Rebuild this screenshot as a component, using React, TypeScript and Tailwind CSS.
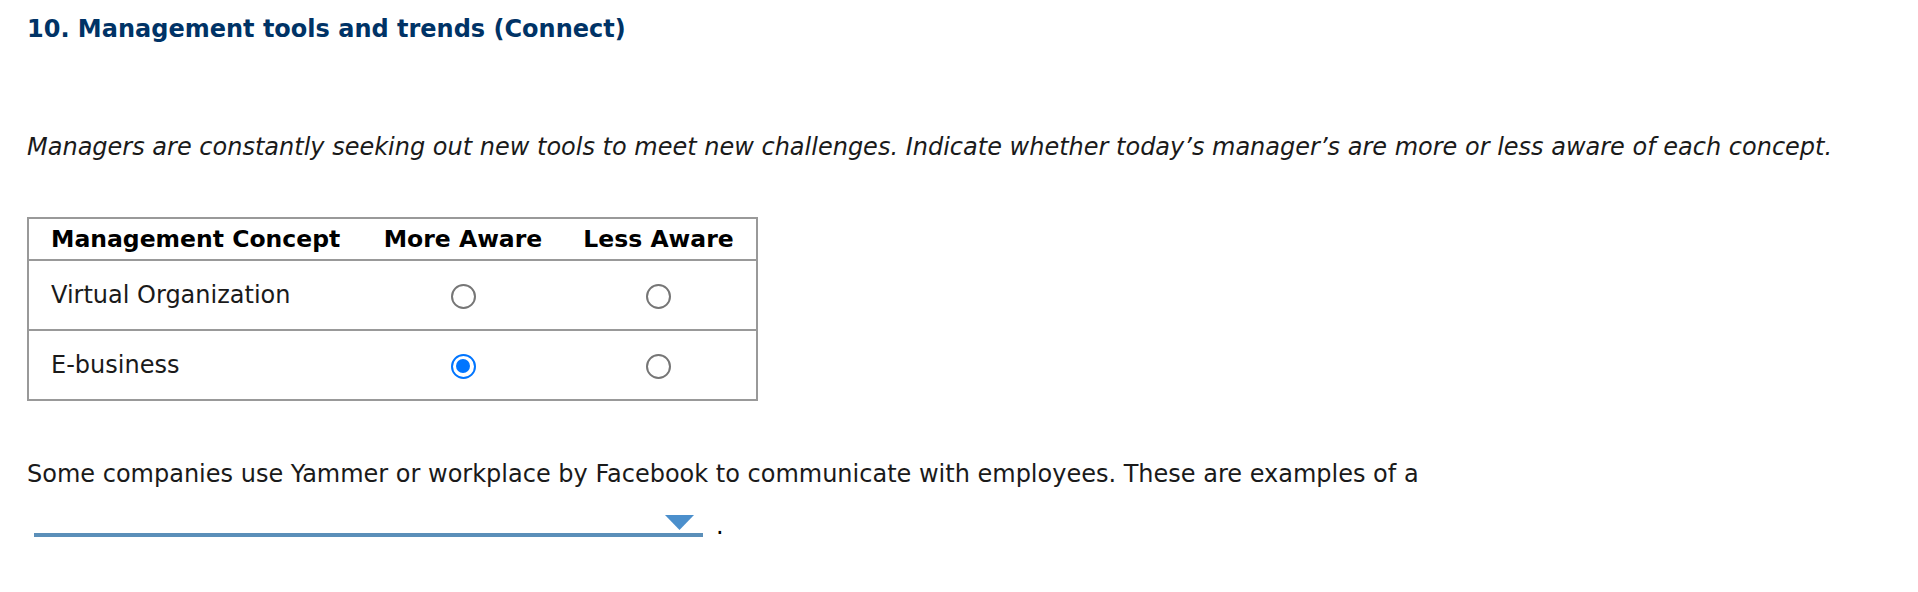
import React from "react";

const rows = [
  { label: "Virtual Organization", value: "" },
  { label: "E-business", value: "more" },
];

const Radio = ({ checked }: { checked: boolean }) =>
  checked ? (
    <span className="inline-flex h-[25px] w-[25px] items-center justify-center rounded-full border-2 border-[#0075ff] bg-white align-middle">
      <span className="h-[14px] w-[14px] rounded-full bg-[#0075ff]" />
    </span>
  ) : (
    <span className="inline-block h-[25px] w-[25px] rounded-full border-2 border-[#767676] bg-white align-middle" />
  );

export default function App() {
  return (
    <div
      className="min-h-[592px] bg-white px-[27px] text-black"
      style={{ fontFamily: '"DejaVu Sans", Verdana, sans-serif' }}
    >
      <h1 className="pt-[14px] text-[24px] font-bold leading-[30px] text-[#003366]">
        10. Management tools and trends (Connect)
      </h1>

      <p className="mt-[88px] text-[24px] italic leading-[30px] text-[#1a1a1a]">
        Managers are constantly seeking out new tools to meet new challenges. Indicate whether
        today’s manager’s are more or less aware of each concept.
      </p>

      <table className="mt-[55px] w-[729px] table-fixed border-collapse border-2 border-[#999999] text-[24px]">
        <thead>
          <tr className="border-b-2 border-[#999999]">
            <th className="w-[337px] whitespace-nowrap pl-[22px] py-[4px] text-left text-[23.5px] font-bold leading-[32px]">
              Management Concept
            </th>
            <th className="w-[196px] whitespace-nowrap py-[4px] text-center text-[23.5px] font-bold leading-[32px]">
              More Aware
            </th>
            <th className="w-[196px] whitespace-nowrap py-[4px] text-center text-[23.5px] font-bold leading-[32px]">
              Less Aware
            </th>
          </tr>
        </thead>
        <tbody>
          {rows.map((row) => (
            <tr key={row.label} className="border-b-2 border-[#999999]">
              <td className="h-[70px] whitespace-nowrap pl-[22px] text-left leading-[30px] text-[#1a1a1a]">
                {row.label}
              </td>
              <td className="text-center">
                <Radio checked={row.value === "more"} />
              </td>
              <td className="text-center">
                <Radio checked={row.value === "less"} />
              </td>
            </tr>
          ))}
        </tbody>
      </table>

      <p className="mt-[58px] text-[24px] leading-[30px] text-[#1a1a1a]">
        Some companies use Yammer or workplace by Facebook to communicate with employees. These
        are examples of a
      </p>

      <div className="mt-[14px] flex items-end">
        <div className="ml-[7px] flex h-[34px] w-[669px] items-start justify-end border-b-[4px] border-[#5b8fb9] pr-[9px] pt-[12px]">
          <svg width="29" height="15" viewBox="0 0 29 15">
            <polygon points="0,0 29,0 14.5,15" fill="#4b8fcc" />
          </svg>
        </div>
        <span className="mb-[-4px] ml-[13px] text-[24px] leading-[30px]">.</span>
      </div>
    </div>
  );
}
